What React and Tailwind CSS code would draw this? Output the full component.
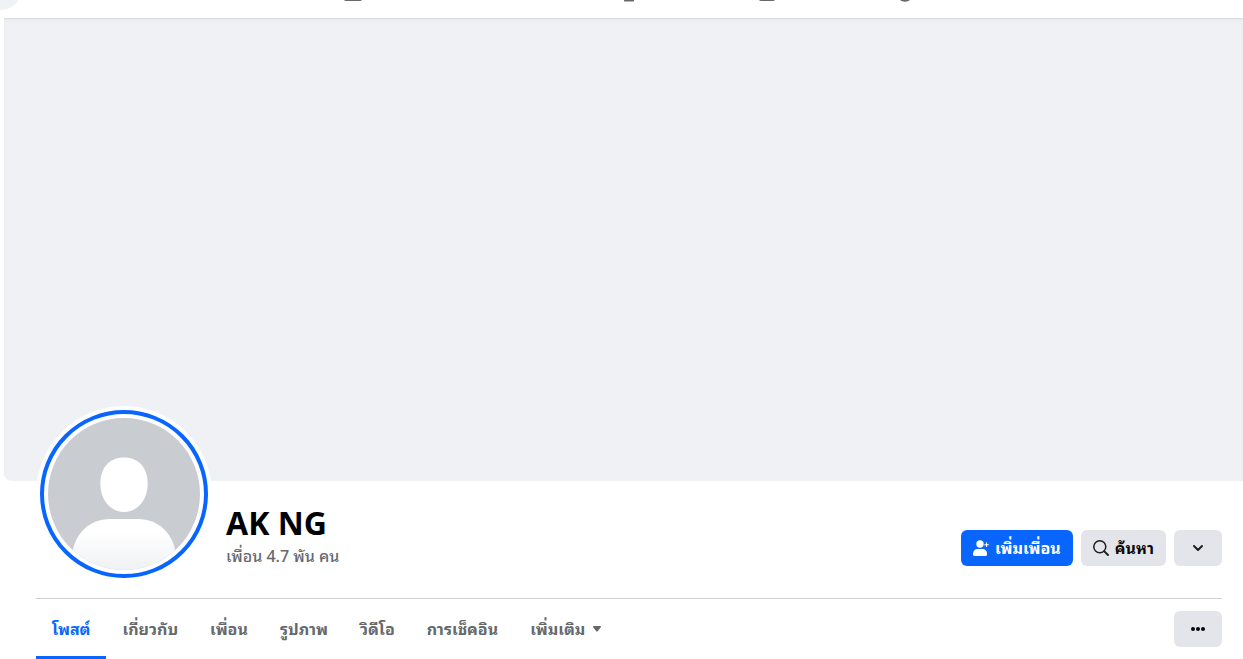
import React, { useState } from "react";

const tabs = [
  { id: "posts", label: "โพสต์" },
  { id: "about", label: "เกี่ยวกับ" },
  { id: "friends", label: "เพื่อน" },
  { id: "photos", label: "รูปภาพ" },
  { id: "videos", label: "วิดีโอ" },
  { id: "checkins", label: "การเช็คอิน" },
];

// Lower edge of the main navigation, most of it is scrolled out of view
const TopBar = () => (
  <header className="relative z-10 h-[18px] overflow-hidden bg-white">
    <div className="flex items-start">
      <svg width="20" height="18" viewBox="0 0 20 18" className="shrink-0" aria-hidden="true">
        <circle cx="1" cy="-10" r="20" fill="#f0f2f5" />
      </svg>
      <nav className="flex min-w-0 flex-1 justify-center pr-1.5" aria-hidden="true">
        <div className="flex w-[690px] text-[#65686c]">
          <span className="flex flex-1 justify-center">
            <svg width="24" height="4" viewBox="0 0 24 4">
              <path d="M3 0h18c-.5.7-1.200 1-2 1H5c-.8 0-1.500-.3-2-1z" fill="currentColor" />
            </svg>
          </span>
          <span className="flex-1" />
          <span className="flex flex-1 justify-center">
            <svg width="24" height="4" viewBox="0 0 24 4">
              <path d="M7 0h10v.6c0 .6-.4 1-1 1H8c-.6 0-1-.4-1-1z" fill="currentColor" />
            </svg>
          </span>
          <span className="flex flex-1 justify-center">
            <svg width="24" height="4" viewBox="0 0 24 4">
              <path d="M4 0h16c-.5.7-1.200 1-2 1H6c-.8 0-1.500-.3-2-1z" fill="currentColor" />
            </svg>
          </span>
          <span className="flex flex-1 justify-center">
            <svg width="24" height="4" viewBox="0 0 24 4">
              <path d="M7 0h10c-1.500 1-3 1.700-5 1.700S8.500 1 7 0z" fill="currentColor" />
            </svg>
          </span>
        </div>
      </nav>
    </div>
  </header>
);

const Avatar = () => (
  <svg viewBox="0 0 176 176" className="-mt-[75px] size-44 shrink-0" role="img" aria-label="AK NG">
    <defs>
      <clipPath id="avatar-clip">
        <circle cx="88" cy="88" r="76" />
      </clipPath>
      <linearGradient id="avatar-body" x1="0" y1="0" x2="0" y2="1">
        <stop offset="0.25" stopColor="#ffffff" />
        <stop offset="1" stopColor="#eff1f4" />
      </linearGradient>
    </defs>
    <circle cx="88" cy="88" r="88" fill="#ffffff" />
    <circle cx="88" cy="88" r="82" fill="none" stroke="#0866ff" strokeWidth="4" />
    <circle cx="88" cy="88" r="76" fill="#c9ccd1" />
    <g clipPath="url(#avatar-clip)">
      <path
        d="M88 51.500C103 51.500 111.700 62 111.700 78C111.700 94 101 106 88 106C75 106 64.300 94 64.300 78C64.300 62 73 51.500 88 51.500z"
        fill="#ffffff"
      />
      <path
        d="M36 164V150C38 127 54 113 74 113H102C122 113 138 127 140 150V164z"
        fill="url(#avatar-body)"
      />
    </g>
  </svg>
);

const AddFriendIcon = () => (
  <svg width="16" height="16" viewBox="0 0 16 16" fill="currentColor" aria-hidden="true">
    <circle cx="7" cy="4" r="3.700" />
    <path d="M0 13.500C0 10.900 2.100 9 4.700 9H9.300C11.900 9 14 10.900 14 13.500V14.500C14 15.300 13.300 16 12.500 16H1.500C.7 16 0 15.300 0 14.500z" />
    <path d="M13.500 2.500V7M11.300 4.750H15.800" stroke="currentColor" strokeWidth="1.200" fill="none" />
  </svg>
);

const SearchIcon = () => (
  <svg width="16" height="16" viewBox="0 0 16 16" fill="none" stroke="#1c1e21" aria-hidden="true">
    <circle cx="6.800" cy="6.800" r="6" strokeWidth="1.500" />
    <path d="M11.300 11.300L15 15" strokeWidth="1.900" strokeLinecap="round" />
  </svg>
);

const App = () => {
  const [active, setActive] = useState("posts");

  return (
    <div className="bg-white font-['Noto_Sans','Noto_Sans_Thai_Looped','Loma','Waree',sans-serif] text-[#080809]">
      <TopBar />
      <main>
        <div className="ml-1 h-[463px] rounded-bl-lg bg-[#f0f1f5] shadow-[inset_0_1px_0_#dcdee1,inset_0_2px_2px_#e4e6e9]" />

        <div className="pr-[21px] pl-9">
          <section className="flex border-b border-[#ced0d4] pb-4">
            <Avatar />
            <div className="ml-3.5 min-w-0 flex-1 pt-[22px]">
              <h1 className="text-[32px] leading-10 font-bold text-black">AK NG</h1>
              <a href="#friends" className="block pt-[3px] text-base leading-5 font-medium text-[#65686c]">
                เพื่อน 4.7 พัน คน
              </a>
            </div>
            <div className="mt-[49px] flex gap-2 self-start text-base leading-5 font-bold">
              <button
                type="button"
                className="flex h-9 items-center gap-1.5 rounded-md bg-[#0866ff] px-3 text-white"
              >
                <AddFriendIcon />
                เพิ่มเพื่อน
              </button>
              <button type="button" className="flex h-9 items-center gap-1.5 rounded-md bg-[#e4e5ea] px-3">
                <SearchIcon />
                ค้นหา
              </button>
              <button
                type="button"
                aria-label="ตัวเลือก"
                className="flex h-9 w-12 items-center justify-center rounded-md bg-[#e4e5ea]"
              >
                <svg width="12" height="12" viewBox="0 0 12 12" fill="none" stroke="#1c1e21" strokeWidth="2">
                  <path d="M2 4L6 8L10 4" strokeLinecap="round" strokeLinejoin="round" />
                </svg>
              </button>
            </div>
          </section>

          <div className="flex items-start justify-between">
            <nav className="flex text-base leading-5 font-bold text-[#65686c]">
              {tabs.map((tab) => (
                <button
                  key={tab.id}
                  type="button"
                  onClick={() => setActive(tab.id)}
                  className={
                    tab.id === active
                      ? "h-[60px] border-b-[3px] border-[#0866ff] px-4 pt-[3px] text-[#0866ff]"
                      : "h-[60px] border-b-[3px] border-transparent px-4 pt-[3px]"
                  }
                >
                  {tab.label}
                </button>
              ))}
              <button
                type="button"
                className="flex h-[60px] items-center gap-2 border-b-[3px] border-transparent px-4 pt-[3px]"
              >
                เพิ่มเติม
                <svg width="8" height="6" viewBox="0 0 8 6" fill="currentColor" aria-hidden="true">
                  <path d="M.8 0H7.200C7.900 0 8.200.8 7.800 1.300L4.700 5.300C4.300 5.800 3.700 5.800 3.300 5.300L.2 1.300C-.2.8.1 0 .8 0z" />
                </svg>
              </button>
            </nav>
            <button
              type="button"
              aria-label="เพิ่มเติม"
              className="mt-3 flex h-9 w-12 items-center justify-center rounded-md bg-[#e4e5ea]"
            >
              <svg width="14" height="4" viewBox="0 0 14 4" fill="#080809">
                <circle cx="2" cy="2" r="2" />
                <circle cx="7" cy="2" r="2" />
                <circle cx="12" cy="2" r="2" />
              </svg>
            </button>
          </div>
        </div>
      </main>
    </div>
  );
};

export default App;
